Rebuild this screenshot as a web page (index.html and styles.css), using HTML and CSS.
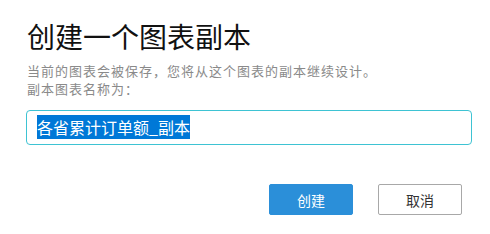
FILE: index.html
```html
<!DOCTYPE html>
<html lang="zh-CN">
<head>
    <meta charset="utf-8">
    <title>创建一个图表副本</title>
    <link rel="stylesheet" href="styles.css">
</head>
<body>
    <div class="dialog">
        <h1 class="dialog-title">创建一个图表副本</h1>
        <p class="dialog-desc">当前的图表会被保存，您将从这个图表的副本继续设计。</p>
        <p class="dialog-desc">副本图表名称为：</p>
        <div class="name-input"><span class="selected">各省累计订单额_副本</span></div>
        <div class="dialog-actions">
            <button class="btn btn-primary">创建</button>
            <button class="btn btn-default">取消</button>
        </div>
    </div>
</body>
</html>
```

FILE: styles.css
```css
body {
    margin: 0;
    padding: 0;
    background: #fff;
    font-family: "Noto Sans CJK SC", "Noto Sans", sans-serif;
}

.dialog {
    width: 490px;
    height: 234px;
    padding: 18px 18px 0 26px;
    box-sizing: border-box;
}

.dialog-title {
    margin: 0 0 8px;
    font-size: 28px;
    font-weight: normal;
    line-height: 36px;
    color: #111;
    padding-left: 1px;
}

.dialog-desc {
    margin: 0;
    font-size: 13px;
    letter-spacing: 1px;
    line-height: 18px;
    color: #8a8a8a;
    padding-left: 1px;
}

.name-input {
    margin-top: 12px;
    height: 35px;
    box-sizing: border-box;
    border: 1px solid #3ec3d3;
    border-radius: 4px;
    padding: 6px 10px 0;
    font-size: 16px;
    line-height: 20px;
}

.selected {
    background: #0078d7;
    color: #fff;
}

.dialog-actions {
    display: flex;
    justify-content: flex-end;
    gap: 25px;
    margin-top: 39px;
    padding-right: 10px;
}

.btn {
    width: 84px;
    height: 31px;
    font-family: inherit;
    font-size: 14px;
    border-radius: 2px;
    cursor: pointer;
    padding: 0;
}

.btn-primary {
    background: #2b8fd9;
    border: 1px solid #2b8fd9;
    color: #fff;
}

.btn-default {
    background: #fff;
    border: 1px solid #a8a8a8;
    color: #333;
}
```
